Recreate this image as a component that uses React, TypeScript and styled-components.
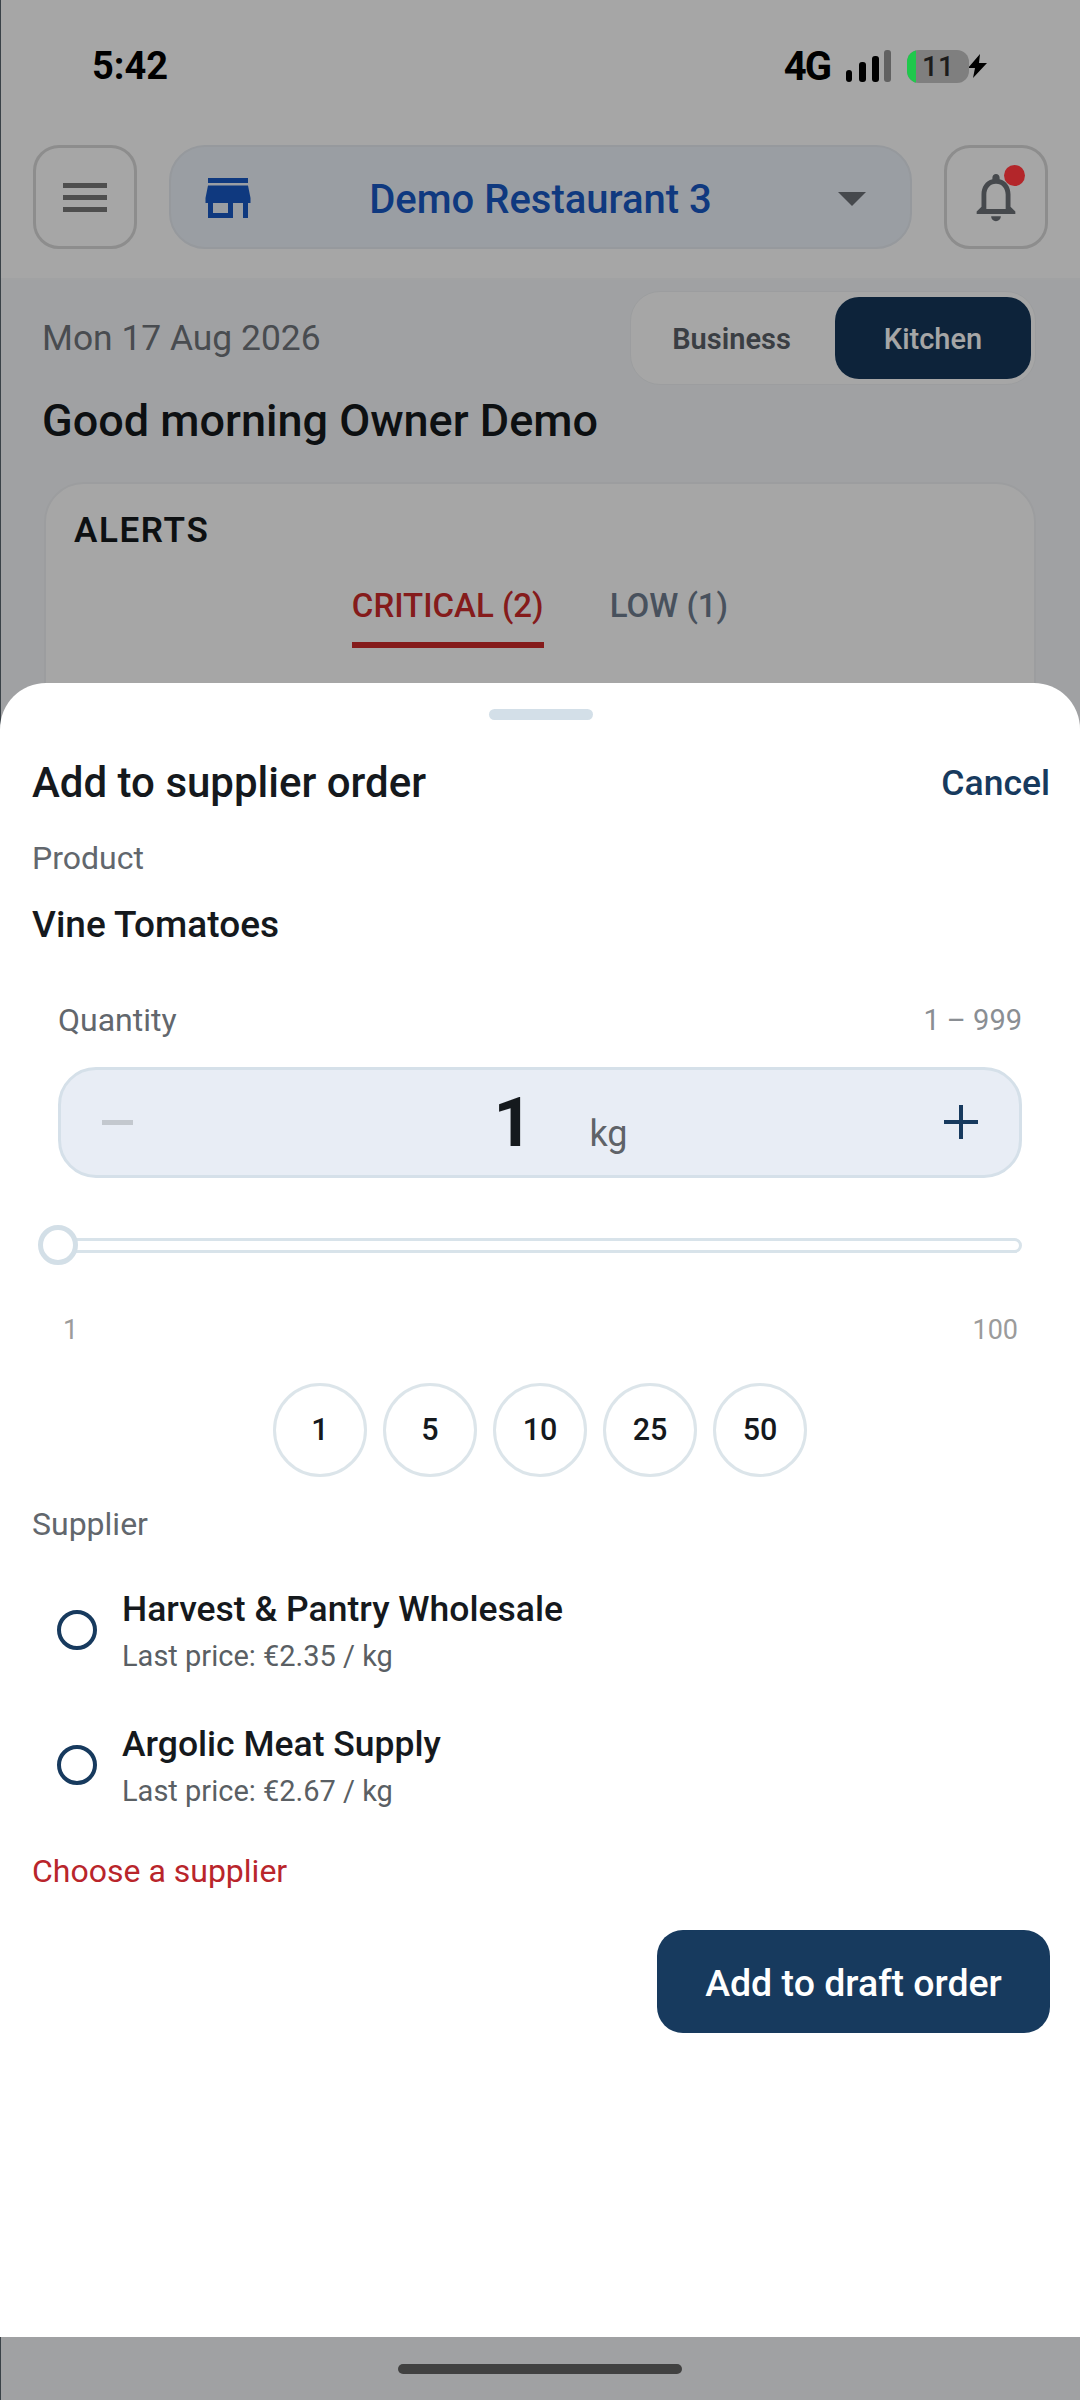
import styled, { createGlobalStyle } from "styled-components";

const GlobalStyle = createGlobalStyle`
    html, body {
        margin: 0;
        padding: 0;
        background: #fff;
    }
    * {
        box-sizing: border-box;
    }
`;

const Page = styled.div`
    position: relative;
    width: 1080px;
    height: 2400px;
    overflow: hidden;
    background: #f6f8fb;
    font-family: Roboto, "Liberation Sans", sans-serif;
    color: #15191d;
`;

const Header = styled.header`
    height: 280px;
    background: #fff;
    border-bottom: 2px solid #f8f9fb;
`;

const StatusBar = styled.div`
    position: relative;
    z-index: 3;
    height: 132px;
    padding: 0 92px 0 92px;
    display: flex;
    align-items: center;
    justify-content: space-between;
    color: #000;
`;

const Time = styled.span`
    font-size: 38px;
    font-weight: 700;
`;

const StatusIcons = styled.div`
    display: flex;
    align-items: center;
    gap: 16px;
`;

const Network = styled.span`
    font-size: 40px;
    font-weight: 700;
    letter-spacing: -2px;
`;

const Battery = styled.div`
    position: relative;
    width: 62px;
    height: 33px;
    border-radius: 12px;
    background: #7f7f7f;
    overflow: hidden;
    display: flex;
    align-items: center;
    justify-content: center;
    font-size: 28px;
    font-weight: 500;
    color: #1c1c1c;
    &::before {
        content: "";
        position: absolute;
        left: 0;
        top: 0;
        bottom: 0;
        width: 9px;
        background: #1fc94c;
    }
`;

const Bolt = styled.svg`
    width: 22px;
    height: 24px;
    margin-left: -19px;
`;

const TopRow = styled.div`
    margin-top: 13px;
    padding: 0 32px 0 33px;
    display: flex;
    gap: 32px;
`;

const IconButton = styled.div`
    position: relative;
    width: 104px;
    height: 104px;
    flex: none;
    border: 3px solid #d9d9d9;
    border-radius: 26px;
    display: flex;
    align-items: center;
    justify-content: center;
`;

const MenuLines = styled.div`
    width: 44px;
    display: flex;
    flex-direction: column;
    gap: 7px;
    span {
        height: 5px;
        background: #787878;
    }
`;

const Picker = styled.div`
    flex: 1;
    height: 104px;
    padding: 0 30px;
    border: 2px solid #e6ebf1;
    border-radius: 36px;
    background: #edf3fa;
    display: grid;
    grid-template-columns: 1fr auto 1fr;
    align-items: center;
`;

const StoreIcon = styled.svg`
    width: 60px;
    height: 60px;
    margin: 2px 0 0 -3px;
`;

const PickerName = styled.span`
    margin-top: 5px;
    font-size: 40px;
    font-weight: 500;
    color: #1858c4;
`;

const Caret = styled.div`
    justify-self: end;
    margin: 3px 14px 0 0;
    width: 0;
    height: 0;
    border-left: 14px solid transparent;
    border-right: 14px solid transparent;
    border-top: 14px solid #6c7177;
`;

const BellDot = styled.span`
    position: absolute;
    z-index: 3;
    top: 17px;
    right: 20px;
    width: 21px;
    height: 21px;
    border-radius: 50%;
    background: #b3262a;
`;

const Main = styled.main`
    padding: 11px 44px 0 42px;
`;

const DateRow = styled.div`
    display: flex;
    align-items: center;
    justify-content: space-between;
`;

const DateText = styled.span`
    font-size: 35.4px;
    color: #70757c;
`;

const ModeToggle = styled.div`
    width: 406px;
    height: 94px;
    padding: 5px 4px 5px 6px;
    border: 1px solid #f0f2f4;
    border-radius: 30px;
    background: #fff;
    display: flex;
`;

const ModeOption = styled.div<{ $active?: boolean }>`
    flex: ${(p) => (p.$active ? "0 0 196px" : "1")};
    padding: 2px ${(p) => (p.$active ? 0 : 9)}px 0 0;
    border-radius: 24px;
    background: ${(p) => (p.$active ? "#14375a" : "transparent")};
    color: ${(p) => (p.$active ? "#fff" : "#5a6068")};
    font-size: 29px;
    font-weight: ${(p) => (p.$active ? 500 : 600)};
    display: flex;
    align-items: center;
    justify-content: center;
`;

const Greeting = styled.h1`
    margin: 10px 0 0;
    font-size: 45px;
    line-height: 52px;
    font-weight: 500;
`;

const AlertCard = styled.section`
    margin: 35px 0 0 2px;
    min-height: 400px;
    padding: 25px 28px;
    border: 2px solid #f0f2f4;
    border-radius: 40px;
    background: #fff;
`;

const AlertTitle = styled.h2`
    margin: 0;
    font-size: 35px;
    line-height: 44px;
    font-weight: 600;
    letter-spacing: 1.6px;
`;

const AlertTabs = styled.div`
    margin-top: 33px;
    display: flex;
    justify-content: center;
    gap: 66px;
`;

const AlertTab = styled.div<{ $active?: boolean }>`
    padding-bottom: 16px;
    border-bottom: 6px solid ${(p) => (p.$active ? "#cc2a2a" : "transparent")};
    font-size: 33px;
    line-height: 40px;
    font-weight: 500;
    color: ${(p) => (p.$active ? "#cc2a2a" : "#6f7d8f")};
`;

const Overlay = styled.div`
    position: absolute;
    inset: 0;
    z-index: 2;
    background: rgba(0, 0, 0, 0.35);
    box-shadow: inset 1px 0 0 #3a4248;
`;

const HomeBar = styled.div`
    position: absolute;
    z-index: 3;
    left: 398px;
    bottom: 26px;
    width: 284px;
    height: 10px;
    border-radius: 5px;
    background: #414141;
`;

const Sheet = styled.div`
    position: absolute;
    z-index: 4;
    left: 0;
    right: 0;
    top: 683px;
    height: 1654px;
    padding: 26px 30px 0 32px;
    border-radius: 46px 46px 0 0;
    background: #fff;
`;

const Handle = styled.div`
    width: 104px;
    height: 11px;
    margin: 0 auto;
    border-radius: 6px;
    background: #d3dfe8;
`;

const SheetHeading = styled.div`
    margin-top: 38px;
    display: flex;
    align-items: center;
    justify-content: space-between;
`;

const SheetTitle = styled.h2`
    margin: 0;
    font-size: 42px;
    line-height: 50px;
    font-weight: 500;
`;

const CancelLink = styled.span`
    font-size: 35.5px;
    font-weight: 500;
    color: #173a5e;
`;

const FieldLabel = styled.div<{ $gap: number }>`
    margin-top: ${(p) => p.$gap}px;
    font-size: 32px;
    line-height: 40px;
    color: #62676d;
`;

const ProductName = styled.div`
    margin-top: 25px;
    font-size: 37px;
    line-height: 44px;
    font-weight: 500;
`;

const QuantityBlock = styled.div`
    margin: 53px 28px 0 26px;
`;

const QuantityHead = styled.div`
    display: flex;
    align-items: center;
    justify-content: space-between;
    font-size: 32px;
    line-height: 40px;
    color: #62676d;
`;

const RangeHint = styled.span`
    font-size: 29px;
    color: #8a8e93;
`;

const Stepper = styled.div`
    margin-top: 27px;
    height: 111px;
    padding: 0 41px 0 41px;
    border: 3px solid #d5e0e9;
    border-radius: 38px;
    background: #e8edf5;
    display: flex;
    align-items: center;
    justify-content: space-between;
`;

const StepperGlyph = styled.svg`
    width: 34px;
    height: 34px;
    margin-top: -2px;
`;

const StepperValue = styled.div`
    display: flex;
    align-items: baseline;
    gap: 57px;
    margin-left: 41px;
`;

const ValueNumber = styled.span`
    font-size: 68px;
    font-weight: 700;
`;

const ValueUnit = styled.span`
    font-size: 36px;
    color: #5f6368;
`;

const Slider = styled.div`
    position: relative;
    height: 40px;
    margin-top: 47px;
    display: flex;
    align-items: center;
`;

const SliderTrack = styled.div`
    flex: 1;
    height: 15px;
    border: 3px solid #d8e3ea;
    border-radius: 8px;
    background: #fff;
`;

const SliderThumb = styled.div`
    position: absolute;
    left: -20px;
    top: 0;
    width: 40px;
    height: 40px;
    border: 5px solid #d3dfe7;
    border-radius: 50%;
    background: #fff;
`;

const SliderScale = styled.div`
    margin-top: 47px;
    padding: 0 4px 0 5px;
    display: flex;
    justify-content: space-between;
    font-size: 27px;
    line-height: 36px;
    color: #9b9b9b;
`;

const PresetRow = styled.div`
    margin-top: 35px;
    display: flex;
    justify-content: center;
    gap: 16px;
`;

const Preset = styled.div`
    width: 94px;
    height: 94px;
    padding-bottom: 2px;
    border: 3px solid #dce5ea;
    border-radius: 50%;
    display: flex;
    align-items: center;
    justify-content: center;
    font-size: 30.5px;
    font-weight: 500;
`;

const SupplierList = styled.div`
    margin-top: 19px;
`;

const SupplierRow = styled.div`
    height: 135px;
    padding-left: 25px;
    display: flex;
    align-items: center;
    gap: 25px;
`;

const Radio = styled.span`
    width: 40px;
    height: 40px;
    flex: none;
    margin-top: -2px;
    border: 4px solid #173a5e;
    border-radius: 50%;
`;

const SupplierName = styled.div`
    margin-top: 1px;
    font-size: 35.5px;
    line-height: 44px;
    font-weight: 500;
`;

const SupplierPrice = styled.div`
    margin-top: 5px;
    font-size: 29px;
    line-height: 40px;
    color: #5a5f64;
`;

const ErrorText = styled.div`
    margin-top: 18px;
    font-size: 32px;
    line-height: 40px;
    color: #b9252b;
`;

const ActionRow = styled.div`
    margin-top: 39px;
    display: flex;
    justify-content: flex-end;
`;

const PrimaryButton = styled.div`
    width: 393px;
    height: 103px;
    padding-top: 2px;
    border-radius: 26px;
    background: #173a5e;
    color: #fff;
    font-size: 37.5px;
    font-weight: 500;
    display: flex;
    align-items: center;
    justify-content: center;
`;

const suppliers = [
    { name: "Harvest & Pantry Wholesale", price: "Last price: €2.35 / kg" },
    { name: "Argolic Meat Supply", price: "Last price: €2.67 / kg" },
];

const presets = [1, 5, 10, 25, 50];

export default function App() {
    return (
        <Page>
            <GlobalStyle />
            <Header>
                <StatusBar>
                    <Time>5:42</Time>
                    <StatusIcons>
                        <Network>4G</Network>
                        <svg width="45" height="32" viewBox="0 0 45 32">
                            <rect x="0" y="20" width="6" height="12" rx="3" fill="#000" />
                            <rect x="13" y="12" width="7" height="20" rx="3" fill="#000" />
                            <rect x="26" y="6" width="7" height="26" rx="3" fill="#000" />
                            <rect x="38" y="0" width="7" height="32" rx="3" fill="#616161" />
                        </svg>
                        <Battery>11</Battery>
                        <Bolt viewBox="0 0 22 24">
                            <path d="M14 0 L2 14 H9 L7 24 L21 9 H13 Z" fill="#000" />
                        </Bolt>
                    </StatusIcons>
                </StatusBar>
                <TopRow>
                    <IconButton>
                        <MenuLines>
                            <span />
                            <span />
                            <span />
                        </MenuLines>
                    </IconButton>
                    <Picker>
                        <StoreIcon viewBox="0 0 24 24">
                            <path
                                fill="#1858c4"
                                d="M20 4H4v2h16V4zm1 10v-2l-1-5H4l-1 5v2h1v6h10v-6h4v6h2v-6h1zm-9 4H6v-4h6v4z"
                            />
                        </StoreIcon>
                        <PickerName>Demo Restaurant 3</PickerName>
                        <Caret />
                    </Picker>
                    <IconButton>
                        <svg width="58" height="58" viewBox="0 0 24 24">
                            <path
                                fill="#6c7177"
                                d="M12 22c1.1 0 2-.9 2-2h-4c0 1.1.89 2 2 2zm6-6v-5c0-3.07-1.64-5.64-4.5-6.32V4c0-.83-.67-1.5-1.5-1.5s-1.5.67-1.5 1.5v.68C7.63 5.36 6 7.92 6 11v5l-2 2v1h16v-1l-2-2zm-2 1H8v-6c0-2.48 1.51-4.5 4-4.5s4 2.02 4 4.5v6z"
                            />
                        </svg>
                        <BellDot />
                    </IconButton>
                </TopRow>
            </Header>
            <Main>
                <DateRow>
                    <DateText>Mon 17 Aug 2026</DateText>
                    <ModeToggle>
                        <ModeOption>Business</ModeOption>
                        <ModeOption $active>Kitchen</ModeOption>
                    </ModeToggle>
                </DateRow>
                <Greeting>Good morning Owner Demo</Greeting>
                <AlertCard>
                    <AlertTitle>ALERTS</AlertTitle>
                    <AlertTabs>
                        <AlertTab $active>CRITICAL (2)</AlertTab>
                        <AlertTab>LOW (1)</AlertTab>
                    </AlertTabs>
                </AlertCard>
            </Main>

            <Overlay />
            <HomeBar />

            <Sheet>
                <Handle />
                <SheetHeading>
                    <SheetTitle>Add to supplier order</SheetTitle>
                    <CancelLink>Cancel</CancelLink>
                </SheetHeading>
                <FieldLabel $gap={30}>Product</FieldLabel>
                <ProductName>Vine Tomatoes</ProductName>

                <QuantityBlock>
                    <QuantityHead>
                        <span>Quantity</span>
                        <RangeHint>1 – 999</RangeHint>
                    </QuantityHead>
                    <Stepper>
                        <StepperGlyph viewBox="0 0 34 34">
                            <rect x="0" y="15" width="31" height="5" fill="#c3c8ce" />
                        </StepperGlyph>
                        <StepperValue>
                            <ValueNumber>1</ValueNumber>
                            <ValueUnit>kg</ValueUnit>
                        </StepperValue>
                        <StepperGlyph viewBox="0 0 34 34">
                            <path d="M15 0h4v15h15v4H19v15h-4V19H0v-4h15z" fill="#173a5e" />
                        </StepperGlyph>
                    </Stepper>
                    <Slider>
                        <SliderTrack />
                        <SliderThumb />
                    </Slider>
                    <SliderScale>
                        <span>1</span>
                        <span>100</span>
                    </SliderScale>
                    <PresetRow>
                        {presets.map((value) => (
                            <Preset key={value}>{value}</Preset>
                        ))}
                    </PresetRow>
                </QuantityBlock>

                <FieldLabel $gap={27}>Supplier</FieldLabel>
                <SupplierList>
                    {suppliers.map((supplier) => (
                        <SupplierRow key={supplier.name}>
                            <Radio />
                            <div>
                                <SupplierName>{supplier.name}</SupplierName>
                                <SupplierPrice>{supplier.price}</SupplierPrice>
                            </div>
                        </SupplierRow>
                    ))}
                </SupplierList>
                <ErrorText>Choose a supplier</ErrorText>
                <ActionRow>
                    <PrimaryButton>Add to draft order</PrimaryButton>
                </ActionRow>
            </Sheet>
        </Page>
    );
}
